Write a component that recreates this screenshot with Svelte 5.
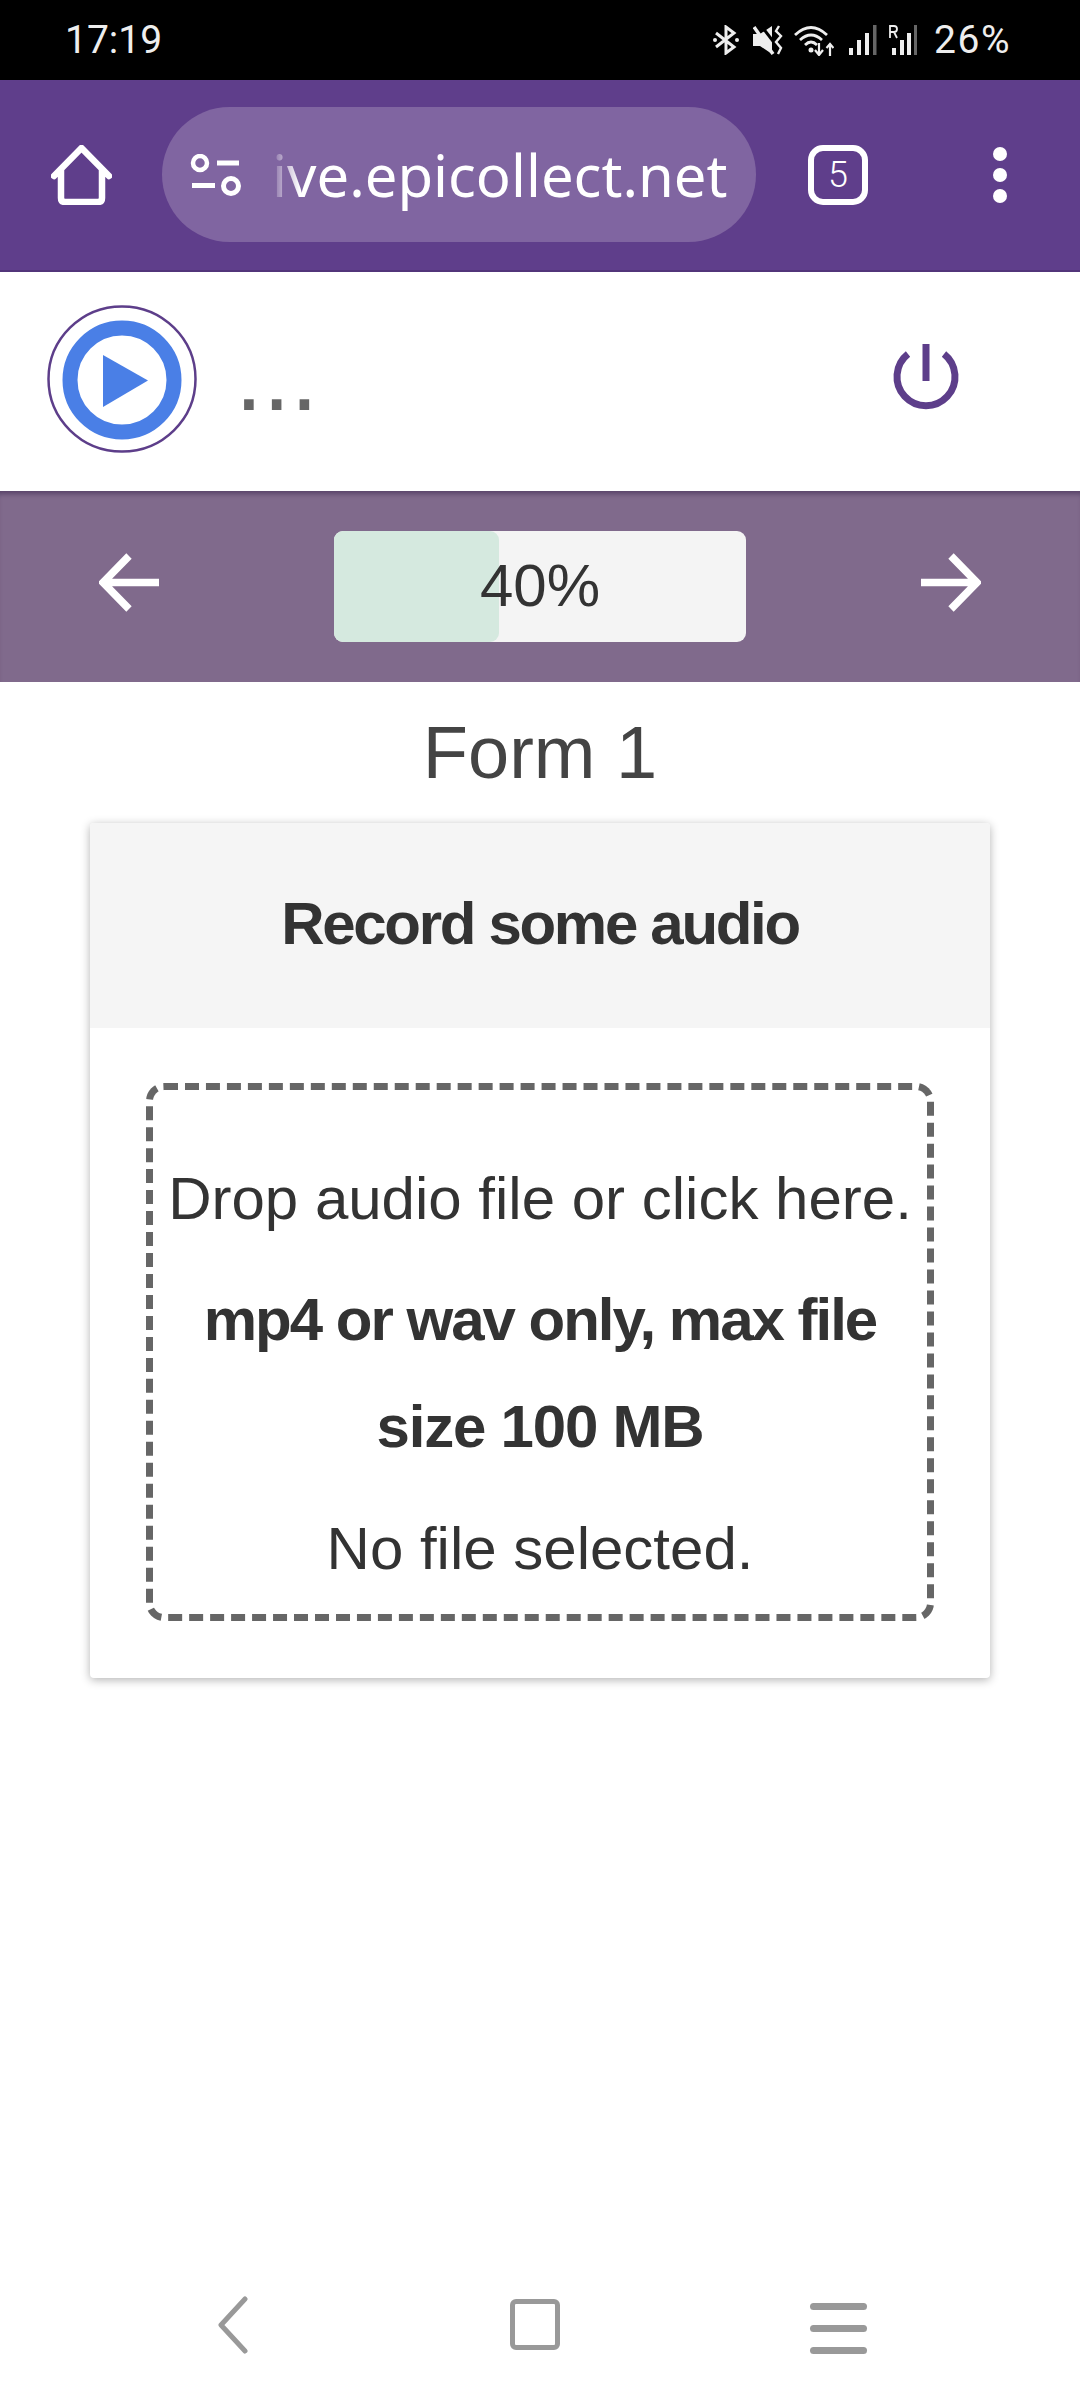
<script>
  const percent = 40;
</script>

<div class="page">
  <div class="status">
    <span class="clock">17:19</span>
    <div class="status-right">
      <svg class="s-bt" viewBox="0 0 26 30" width="26" height="30"><path d="M3 8 L21 22 L13 28 V2 L21 8 L3 22" fill="none" stroke="#eee" stroke-width="3"/><circle cx="2" cy="15" r="2" fill="#eee"/><circle cx="24" cy="15" r="2" fill="#eee"/></svg>
      <svg class="s-mute" viewBox="0 0 30 30" width="30" height="30"><path d="M0 9 H7 L19 1 V29 L7 21 H0 Z" fill="#eee"/><path d="M6 -2 L23 20" stroke="#000" stroke-width="3"/><path d="M1 2 L20 29" stroke="#eee" stroke-width="3.500"/><path d="M26 1 L23 6 L28 11 L23 17 L28 23 L25 29" fill="none" stroke="#eee" stroke-width="2.400"/></svg>
      <svg class="s-wifi" viewBox="0 0 40 32" width="40" height="32"><g fill="none" stroke="#eee" stroke-width="2.800"><path d="M1 11 Q17 -4 33 11"/><path d="M6 16 Q17 6 28 16"/><path d="M11 21 Q17 15 23 21"/></g><circle cx="17" cy="26" r="2.500" fill="#eee"/><path d="M25 19 V30 M21 26 L25 31 L29 26" fill="none" stroke="#eee" stroke-width="2.200"/><path d="M36 32 V21 M32.500 24 L36 20 L39.500 24" fill="none" stroke="#eee" stroke-width="2.200"/></svg>
      <svg class="s-sig" viewBox="0 0 28 30" width="28" height="30"><rect x="0" y="23" width="4" height="7" fill="#eee"/><rect x="8" y="15" width="4" height="15" fill="#eee"/><rect x="16" y="8" width="4" height="22" fill="#eee"/><rect x="24" y="0" width="3.500" height="30" fill="#666"/></svg>
      <svg class="s-sig2" viewBox="0 0 28 30" width="28" height="30"><rect x="3" y="23" width="4" height="7" fill="#eee"/><rect x="11" y="15" width="4" height="15" fill="#eee"/><rect x="18" y="8" width="4" height="22" fill="#eee"/><rect x="25" y="0" width="3" height="30" fill="#666"/><path d="M1 13 V1 H5 Q8 1 8 4 Q8 7 5 7 H1 M5 7 L8 13" fill="none" stroke="#eee" stroke-width="1.800"/></svg>
      <span class="battery">26%</span>
    </div>
  </div>

  <div class="browser">
    <svg class="home" viewBox="0 0 61 60" width="61" height="60"><path d="M3 31 L30.500 3 L58 31 M10 25 V53 Q10 57 14 57 H47 Q51 57 51 53 V25" fill="none" stroke="#fff" stroke-width="6.500" stroke-linecap="round" stroke-linejoin="round"/></svg>
    <div class="pill">
      <svg class="tune" viewBox="0 0 51 42" width="51" height="42"><circle cx="10" cy="9" r="7" fill="none" stroke="#fff" stroke-width="4.500"/><rect x="27" y="6.500" width="22" height="5" fill="#fff"/><rect x="2" y="29" width="23" height="5" fill="#fff"/><circle cx="41" cy="32" r="7.500" fill="none" stroke="#fff" stroke-width="5"/></svg>
      <span class="url">ive.epicollect.net</span>
    </div>
    <div class="tabs">5</div>
    <div class="more"><i></i><i></i><i></i></div>
  </div>

  <header class="app-head">
    <div class="logo">
      <svg viewBox="0 0 150 148" width="150" height="148">
        <ellipse cx="75" cy="74" rx="73.500" ry="72.500" fill="#fff" stroke="#5d3e8a" stroke-width="2.500"/>
        <circle cx="75" cy="75" r="52" fill="none" stroke="#4a7fe6" stroke-width="15"/>
        <path d="M56 50 L101 75.500 L56 102 Z" fill="#4a7fe6"/>
      </svg>
    </div>
    <span class="ellipsis">...</span>
    <svg class="power" viewBox="0 0 68 68" width="68" height="68"><path d="M16 10 A29 29 0 1 0 52 10" fill="none" stroke="#5d3e8a" stroke-width="7"/><rect x="30.500" y="0" width="7" height="37" fill="#5d3e8a"/></svg>
  </header>

  <nav class="progress-nav">
    <svg viewBox="0 0 60 60" width="60" height="60"><path d="M60 29.500 H5 M30 3 L4 29.500 L30 56" fill="none" stroke="#fff" stroke-width="7.500"/></svg>
    <div class="progress">
      <div class="fill" style="width: {percent}%"></div>
      <span>{percent}%</span>
    </div>
    <svg viewBox="0 0 60 60" width="60" height="60"><path d="M0 29.500 H55 M30 3 L56 29.500 L30 56" fill="none" stroke="#fff" stroke-width="7.500"/></svg>
  </nav>

  <h1>Form 1</h1>

  <section class="card">
    <div class="card-head">Record some audio</div>
    <div class="card-body">
      <div class="drop">
        <p>Drop audio file or click here.</p>
        <p class="limits"><b class="l1">mp4 or wav only, max file</b> <b class="l2">size 100 MB</b></p>
        <p class="last">No file selected.</p>
      </div>
    </div>
  </section>

  <div class="spacer"></div>

  <div class="sysnav">
    <svg class="n-back" viewBox="0 0 32 58" width="32" height="58"><path d="M28 3 L4 29 L28 55" fill="none" stroke="#999" stroke-width="5" stroke-linecap="round" stroke-linejoin="round"/></svg>
    <div class="n-home"></div>
    <div class="n-menu"><i></i><i></i><i></i></div>
  </div>
</div>

<style>
  :global(body) { margin: 0; background: #fff; }
  .page {
    width: 1080px; height: 2400px; display: flex; flex-direction: column;
    font-family: "Liberation Sans", Arial, sans-serif; color: #333; overflow: hidden;
  }
  .status {
    height: 80px; background: #000; color: #eee; display: flex; align-items: center;
    justify-content: space-between; padding: 0 69px 0 65px; box-sizing: border-box;
    font-family: Roboto, sans-serif; font-size: 39px; flex: none;
  }
  .battery { letter-spacing: 1.5px; margin-left: 3px; }
  .status-right { display: flex; align-items: center; gap: 14px; }
  .s-wifi { margin-left: -3px; }
  .s-sig { margin-left: 1px; }
  .s-sig2 { margin-left: -2px; }

  .browser {
    height: 192px; flex: none; box-sizing: border-box; background: #5f3e8b; border-bottom: 2px solid #52357a;
    padding-bottom: 1px; display: flex; align-items: center;
  }
  .home { margin-left: 51px; flex: none; }
  .pill {
    margin-left: 50px; width: 594px; height: 135px; border-radius: 68px; background: #8065a1;
    display: flex; align-items: center; box-sizing: border-box; padding-left: 28px; flex: none; overflow: hidden;
  }
  .tune { flex: none; }
  .url {
    margin-left: 31px; color: #fff; font-family: "Noto Sans", sans-serif; font-size: 58px; white-space: nowrap;
    -webkit-mask-image: linear-gradient(90deg, rgba(0,0,0,.05) 0, rgba(0,0,0,.5) 12px, #000 28px);
    mask-image: linear-gradient(90deg, rgba(0,0,0,.05) 0, rgba(0,0,0,.5) 12px, #000 28px);
  }
  .tabs {
    margin-left: 52px; width: 60px; height: 60px; box-sizing: border-box; border: 6px solid #fff; border-radius: 15px;
    color: #fff; display: flex; align-items: center; justify-content: center; font-family: Roboto, sans-serif; font-weight: 300; font-size: 36px; flex: none;
  }
  .more { margin-left: 125px; display: flex; flex-direction: column; gap: 7px; flex: none; }
  .more i { width: 14px; height: 14px; border-radius: 50%; background: #fff; display: block; }

  .app-head { height: 219px; flex: none; display: flex; align-items: center; background: #fff; }
  .logo { margin-left: 47px; line-height: 0; flex: none; position: relative; top: -3px; }
  .ellipsis {
    margin-left: 38px; color: #666; font-size: 100px; line-height: 100px; position: relative; top: -7px; flex: none;
  }
  .power { margin-left: auto; margin-right: 120px; flex: none; position: relative; top: -4px; }

  .progress-nav {
    height: 191px; flex: none; background: #806a8c; display: flex; align-items: center; box-sizing: border-box;
    padding: 0 99px; justify-content: space-between; box-shadow: inset 0 6px 5px -3px rgba(50, 30, 70, .5);
  }
  .progress-nav svg { position: relative; top: -4px; }
  .progress {
    position: relative; width: 412px; height: 111px; background: #f4f4f4; border-radius: 9px; overflow: hidden;
    display: flex; align-items: center; justify-content: center; font-size: 60px; color: #333;
  }
  .progress span { position: relative; top: -1px; }
  .fill { position: absolute; left: 0; top: 0; bottom: 0; background: #d5e9df; border-radius: 0 9px 9px 0; }

  h1 { margin: 21px 0 20px; text-align: center; font-weight: 400; font-size: 74px; line-height: 100px; color: #444; flex: none; }

  .card {
    margin: 0 90px; border-radius: 4px; background: #fff; box-shadow: 0 2px 10px rgba(0,0,0,.3); flex: none; overflow: hidden;
  }
  .card-head {
    height: 205px; box-sizing: border-box; padding-bottom: 4px; background: #f5f5f5; display: flex; align-items: center; justify-content: center;
    font-weight: 700; font-size: 60px; letter-spacing: -2.3px;
  }
  .card-body { padding: 55px 56px 57px; }
  .drop {
    border: 7px dashed #666; border-radius: 18px; padding: 55px 11px 12px; text-align: center; font-size: 60px; line-height: 107px;
  }
  .drop p { margin: 0 0 14px; }
  .drop .limits { margin-bottom: 15px; }
  .drop .l1, .drop .l2 { display: block; }
  .drop .l1 { letter-spacing: -2px; }
  .drop .l2 { letter-spacing: -1.2px; }
  .drop .last { margin: 0; }

  .spacer { flex: 1; }
  .sysnav { height: 130px; flex: none; position: relative; display: flex; align-items: flex-start; }
  .n-back { margin: 26px 0 0 217px; flex: none; }
  .n-home {
    margin: 29px 0 0 261px; width: 50px; height: 51px; box-sizing: border-box; border: 5px solid #999; border-radius: 6px; flex: none;
  }
  .n-menu { margin: 33px 0 0 250px; display: flex; flex-direction: column; gap: 15px; flex: none; }
  .n-menu i { display: block; width: 57px; height: 7px; border-radius: 4px; background: #999; }
</style>
